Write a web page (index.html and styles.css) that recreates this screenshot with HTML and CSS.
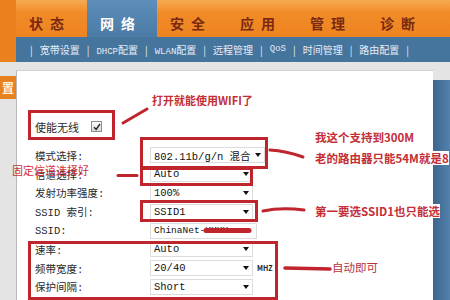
FILE: index.html
```html
<!DOCTYPE html>
<html lang="zh-CN">
<head>
  <meta charset="UTF-8">
  <title>无线配置</title>
  <link rel="stylesheet" href="styles.css">
</head>
<body>
  <div class="tabs">
    <div class="strip"></div>
    <div class="tab first">状态</div>
    <div class="tab active">网络</div>
    <div class="tab">安全</div>
    <div class="tab">应用</div>
    <div class="tab">管理</div>
    <div class="tab">诊断</div>
  </div>
  <div class="subbar">
    <div class="strip"></div>
    <div class="submenu">
      <span>|</span><span>宽带设置</span>
      <span>|</span><span><b class="mono">DHCP</b>配置</span>
      <span>|</span><span><b class="mono">WLAN</b>配置</span>
      <span>|</span><span>远程管理</span>
      <span>|</span><span class="mono">QoS</span>
      <span>|</span><span>时间管理</span>
      <span>|</span><span>路由配置</span>
      <span>|</span>
    </div>
  </div>

  <div class="main">
    <div class="side">
      <div class="side-tab">置</div>
    </div>
    <div class="content">
      <div class="enable-row">
        <span>使能无线</span>
        <span class="checkbox">
          <svg width="8" height="8" viewBox="0 0 8 8"><path d="M1 4.2 L3.2 6.5 L7 1" fill="none" stroke="#222" stroke-width="1.4"/></svg>
        </span>
      </div>
      <div class="form">
        <div class="label">模式选择:</div>
        <div class="select wide"><span>802.11b/g/n 混合</span><i></i></div>
        <div class="label">信道选择:</div>
        <div class="select"><span>Auto</span><i></i></div>
        <div class="label">发射功率强度:</div>
        <div class="select"><span>100%</span><i></i></div>
        <div class="label">SSID 索引:</div>
        <div class="select"><span>SSID1</span><i></i></div>
        <div class="label">SSID:</div>
        <div class="input"><span>ChinaNet-XXXX</span></div>
        <div class="label">速率:</div>
        <div class="select"><span>Auto</span><i></i></div>
        <div class="label">频带宽度:</div>
        <div class="ctrl"><div class="select"><span>20/40</span><i></i></div><span class="unit">MHZ</span></div>
        <div class="label">保护间隔:</div>
        <div class="select"><span>Short</span><i></i></div>
      </div>
    </div>
    <div class="right-panel"></div>
  </div>

  <svg class="marks" width="450" height="300" viewBox="0 0 450 300">
    <g fill="none" stroke="#c0242c" stroke-width="3" stroke-linecap="round">
      <rect x="29.5" y="111.5" width="84" height="27"/>
      <rect x="141.5" y="138.5" width="125" height="29"/>
      <rect x="141.5" y="168.5" width="110" height="16"/>
      <rect x="141.5" y="201.5" width="115" height="19"/>
      <rect x="29.5" y="242.5" width="247" height="56"/>
      <path d="M123 123 L147 109"/>
      <path d="M270 150 Q286 151 303 157"/>
      <path d="M118 175.5 L137 175.5"/>
      <path d="M263 211 Q281 207 304 210"/>
      <path d="M285 268 L330 269" stroke-width="3.5"/>
      <path d="M206 230.5 L249 230.5" stroke-width="5"/>
    </g>
  </svg>

  <div class="note n1">打开就能使用WIFI了</div>
  <div class="note n2">我这个支持到300M</div>
  <div class="note n3">老的路由器只能54M就是8</div>
  <div class="note n4">固定信道选择好</div>
  <div class="note n5">第一要选SSID1也只能选</div>
  <div class="note n6">自动即可</div>
</body>
</html>
```
FILE: styles.css
```css
body {
  margin: 0;
  width: 450px;
  height: 300px;
  overflow: hidden;
  position: relative;
  font-family: "Noto Sans CJK SC", sans-serif;
  background: #fff;
}

.mono {
  font-family: "Liberation Mono", "Noto Sans CJK SC", monospace;
  font-weight: normal;
}

.tabs {
  display: flex;
  height: 37px;
  background: linear-gradient(#f7aa52, #f08b27 35%, #ee8421);
}

.strip {
  width: 16px;
  flex: none;
  background: #e9811f;
}

.tab {
  width: 70px;
  box-sizing: border-box;
  padding: 15px 0 0 13px;
  font-size: 14px;
  line-height: 16px;
  font-weight: bold;
  letter-spacing: 7px;
  color: #7a2a12;
}

.tab.first {
  width: 71px;
}

.tab.active {
  background: linear-gradient(#5d8fba, #4a7aa5);
  color: #fff;
}

.subbar {
  display: flex;
  height: 25px;
}

.submenu {
  flex: 1;
  display: flex;
  gap: 7px;
  padding-left: 14px;
  background: #45749d;
  color: #e6edf5;
  font-size: 10px;
  line-height: 25px;
}

.submenu .mono {
  font-size: 9px;
}

.main {
  display: flex;
  height: 238px;
  background: #e4e4e4;
}

.side {
  width: 16px;
  flex: none;
  padding-top: 14px;
}

.side-tab {
  height: 23px;
  background: #e8821f;
  color: #fff4e0;
  font-size: 12px;
  font-weight: bold;
  line-height: 23px;
  text-align: center;
}

.content {
  flex: 1;
  margin-top: 8px;
  padding: 46px 0 0 18px;
  background: #fff;
  border-left: 1px solid #b8b8b8;
  border-top: 1px solid #cfcfcf;
  font-size: 11px;
  color: #2a2a2a;
}

.enable-row {
  display: flex;
  align-items: center;
  height: 19px;
}

.checkbox {
  display: flex;
  align-items: center;
  justify-content: center;
  width: 9px;
  height: 9px;
  margin-left: 12px;
  border: 1px solid #8c8c8c;
  background: linear-gradient(#fdfdfd, #d9d9d9);
}

.form {
  display: grid;
  grid-template-columns: 115px auto;
  grid-auto-rows: 18.8px;
  align-items: center;
  margin-top: 10px;
}

.label {
  font-family: "Liberation Mono", "Noto Sans CJK SC", monospace;
  font-size: 10.5px;
}

.select,
.input {
  display: flex;
  align-items: center;
  justify-content: space-between;
  box-sizing: border-box;
  width: 103px;
  height: 16px;
  padding: 0 3px;
  border: 1px solid #dcdcdc;
  font-family: "Liberation Mono", "Noto Sans CJK SC", monospace;
  font-size: 10.5px;
  color: #111;
}

.select.wide {
  width: 115px;
}

.input {
  width: 107px;
  font-size: 9.5px;
}

.select i {
  width: 0;
  height: 0;
  border-left: 3.5px solid transparent;
  border-right: 3.5px solid transparent;
  border-top: 4px solid #111;
}

.ctrl {
  display: flex;
  align-items: center;
}

.unit {
  margin-left: 4px;
  font-size: 7px;
  font-weight: bold;
  color: #222;
}

.right-panel {
  width: 17px;
  flex: none;
  margin-top: 18px;
  background: linear-gradient(90deg, #3b668e, #5381ab);
}

.marks {
  position: absolute;
  left: 0;
  top: 0;
}

.note {
  position: absolute;
  color: #c42e36;
  font-size: 11.5px;
  font-weight: bold;
  line-height: 14px;
  white-space: nowrap;
}

.n1 { left: 152px; top: 93px; font-size: 11px; }
.n2 { left: 315px; top: 130px; }
.n3 { left: 315px; top: 151px; background: #fff; }
.n4 { left: 12px; top: 163px; font-weight: normal; font-size: 11px; color: #d2303a; }
.n5 { left: 315px; top: 204px; background: #fff; }
.n6 { left: 332px; top: 260px; font-weight: normal; color: #b8323a; }
```
